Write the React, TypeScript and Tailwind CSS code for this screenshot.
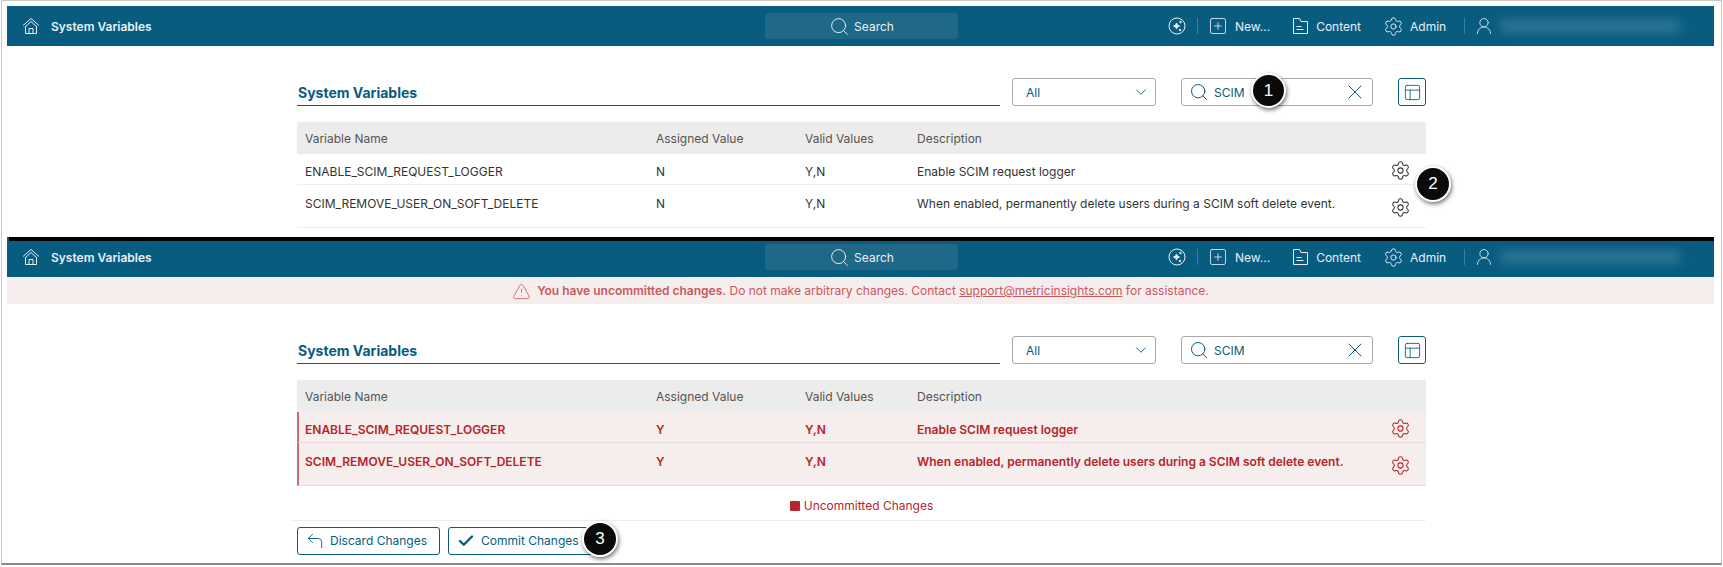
import { Check, ChevronDown, CornerUpLeft, PanelsTopLeft, Search, Settings, SquarePlus, TriangleAlert, UserRound, X } from "lucide-react";

const HomeIcon = () => (
    <svg width="18" height="18" viewBox="0 0 18 18" fill="none" stroke="currentColor" strokeWidth="1">
        <path d="M1 8.5 9 1.5l8 7" />
        <path d="M3 10 9 4.5l6 5.5" />
        <path d="M3.5 9.5v7h11v-7" />
        <path d="M7 16.5v-5h4v5" />
    </svg>
);

const SparkIcon = () => (
    <svg width="18" height="18" viewBox="0 0 18 18" fill="none" stroke="currentColor" strokeWidth="1">
        <circle cx="9" cy="9" r="8" />
        <path d="M8.5 6l.9 2.1 2.1.9-2.1.9-.9 2.1-.9-2.1-2.1-.9 2.1-.9z" fill="currentColor" />
        <circle cx="12.5" cy="5" r=".8" fill="currentColor" />
        <circle cx="12" cy="13" r=".8" fill="currentColor" />
    </svg>
);

const ContentIcon = () => (
    <svg width="17" height="18" viewBox="0 0 17 18" fill="none" stroke="currentColor" strokeWidth="1">
        <path d="M1.5 16.5V1.5h6l1.5 3h6.5v12z" />
        <path d="M4.5 9.5h5M4.5 12.5h7" />
    </svg>
);

const Callout = ({ n, className }: { n: number; className: string }) => (
    <div className={`absolute flex items-center justify-center rounded-full bg-[#0a0a0a] border-2 border-white text-white text-[17px] shadow-[1px_2px_4px_rgba(0,0,0,0.55)] font-['Liberation_Sans',sans-serif] ${className}`}>
        {n}
    </div>
);

const TopBar = () => (
    <div className="flex items-center h-[40px] bg-[#085c80] text-[#e8f0f4] text-[12px]">
        <div className="flex items-center w-[758px] pl-[15px]">
            <HomeIcon />
            <span className="ml-[11px] pt-px font-semibold">System Variables</span>
        </div>
        <div className="flex items-center justify-center gap-[4px] w-[193px] h-[26px] rounded-[3px] bg-[#1f6887]">
            <Search size={21} strokeWidth={1.1} />
            <span className="pt-px">Search</span>
        </div>
        <div className="flex items-center ml-[210px]">
            <SparkIcon />
            <div className="w-px h-[16px] bg-[#3d7f9b] ml-[11px] mr-[10px]" />
            <SquarePlus size={20} strokeWidth={1} />
            <span className="ml-[7px] pt-px">New...</span>
            <span className="ml-[22px]"><ContentIcon /></span>
            <span className="ml-[7px] pt-px">Content</span>
            <Settings size={21} strokeWidth={1.1} className="ml-[22px]" />
            <span className="ml-[6px] pt-px">Admin</span>
            <div className="w-px h-[16px] bg-[#3d7f9b] ml-[18px] mr-[9px]" />
            <UserRound size={20} strokeWidth={1} />
            <div className="ml-[6px] w-[180px] h-[14px] bg-[#2a7391] blur-[5px]" />
        </div>
    </div>
);

const Toolbar = () => (
    <div className="flex items-center h-[28px]">
        <div className="flex items-center h-full w-[703px] border-b border-[#085c80]">
            <h1 className="text-[14px] font-bold text-[#085c80] leading-none pt-[3px] pl-px">System Variables</h1>
        </div>
        <div className="flex items-center justify-between ml-[12px] w-[144px] h-[28px] pl-[13px] pr-[5px] rounded-[3px] border border-[#aaaaaa] text-[12px] text-[#085c80]">
            <span className="pt-px">All</span>
            <ChevronDown size={18} strokeWidth={1.2} />
        </div>
        <div className="flex items-center ml-[25px] w-[192px] h-[28px] pl-[7px] pr-[5px] rounded-[3px] border border-[#aaaaaa] text-[12px] text-[#085c80]">
            <Search size={20} strokeWidth={1.2} />
            <span className="ml-[5px] pt-px">SCIM</span>
            <X size={24} strokeWidth={1} className="ml-auto" />
        </div>
        <div className="flex items-center justify-center ml-[25px] w-[28px] h-[28px] rounded-[3px] border border-[#085c80] text-[#085c80]">
            <PanelsTopLeft size={19} strokeWidth={1.1} />
        </div>
    </div>
);

const rowGrid = "grid grid-cols-[351px_149px_112px_1fr]";

const rows = [
    { name: "ENABLE_SCIM_REQUEST_LOGGER", desc: "Enable SCIM request logger", h: "h-[31px] pt-[9px]" },
    { name: "SCIM_REMOVE_USER_ON_SOFT_DELETE", desc: "When enabled, permanently delete users during a SCIM soft delete event.", h: "h-[43px] pt-[10px]" },
];

const VarTable = ({ changed, value }: { changed: boolean; value: string }) => (
    <div className="mt-[16px] text-[12px]">
        <div className={`${rowGrid} items-center h-[32px] pl-[8px] pt-[2px] bg-[#ececec] rounded-t-[2px] text-[#555555]`}>
            <span>Variable Name</span>
            <span>Assigned Value</span>
            <span>Valid Values</span>
            <span>Description</span>
        </div>
        {rows.map((r) => (
            <div
                key={r.name}
                className={`relative ${rowGrid} ${r.h} border-b ${changed
                    ? "bg-[#f6eded] border-[#e6dede] text-[#b5252c] font-semibold border-l-2 border-l-[#cf6a70] pl-[6px]"
                    : "border-[#eeeeee] text-[#333333] pl-[8px]"}`}
            >
                <span>{r.name}</span>
                <span>{value}</span>
                <span>Y,N</span>
                <span>{r.desc}</span>
                <div className="absolute right-[15px] top-[3px] bottom-0 flex items-center">
                    <Settings size={21} strokeWidth={1.15} className={changed ? "text-[#b5252c]" : "text-[#333333]"} />
                </div>
            </div>
        ))}
    </div>
);

export default function App() {
    return (
        <div className="relative w-[1723px] h-[567px] overflow-hidden bg-white font-['Inter',sans-serif]">
            <div className="ml-px w-[1721px] h-[565px] pt-[5px] pl-[5px] pr-[7px] border border-[#c8c8c8] border-b-2 border-b-[#8a8a8a]">
                <TopBar />
                <div className="h-[191px] pl-[290px] pr-[288px] pt-[32px]">
                    <Toolbar />
                    <VarTable changed={false} value="N" />
                </div>
                <div className="relative">
                    <TopBar />
                    <div className="absolute top-0 left-[2px] right-0 h-[4px] bg-black" />
                </div>
                <div className="flex items-center justify-center gap-[6px] h-[27px] pt-px bg-[#f6eded] text-[12px] text-[#c9585f]">
                    <TriangleAlert size={19} strokeWidth={1} />
                    <span>
                        <b className="font-semibold">You have uncommitted changes.</b> Do not make arbitrary changes. Contact{" "}
                        <span className="underline">support@metricinsights.com</span> for assistance.
                    </span>
                </div>
                <div className="pl-[283px] pr-[288px] pt-[32px]">
                    <div className="pl-[7px]">
                        <Toolbar />
                        <VarTable changed={true} value="Y" />
                    </div>
                    <div className="flex items-center justify-center gap-[4px] h-[30px] mt-[4px] pt-[2px] pl-[7px] text-[12px] text-[#b5252c]">
                        <div className="w-[10px] h-[10px] rounded-[1px] bg-[#b5252c]" />
                        <span>Uncommitted Changes</span>
                    </div>
                    <div className="flex gap-[8px] pt-[6px] pl-[7px] border-t border-[#eeeeee] text-[12px] text-[#085c80]">
                        <button className="flex items-center w-[143px] h-[28px] pl-[7px] rounded-[3px] border border-[#085c80]">
                            <CornerUpLeft size={20} strokeWidth={1.1} />
                            <span className="ml-[5px]">Discard Changes</span>
                        </button>
                        <button className="flex items-center w-[146px] h-[28px] pl-[8px] rounded-[3px] border border-[#085c80]">
                            <Check size={18} strokeWidth={3.2} />
                            <span className="ml-[6px]">Commit Changes</span>
                        </button>
                    </div>
                </div>
            </div>
            <Callout n={1} className="left-[1251px] top-[73px] w-[35px] h-[35px]" />
            <Callout n={2} className="left-[1415px] top-[166px] w-[36px] h-[36px]" />
            <Callout n={3} className="left-[582px] top-[521px] w-[36px] h-[36px]" />
        </div>
    );
}
